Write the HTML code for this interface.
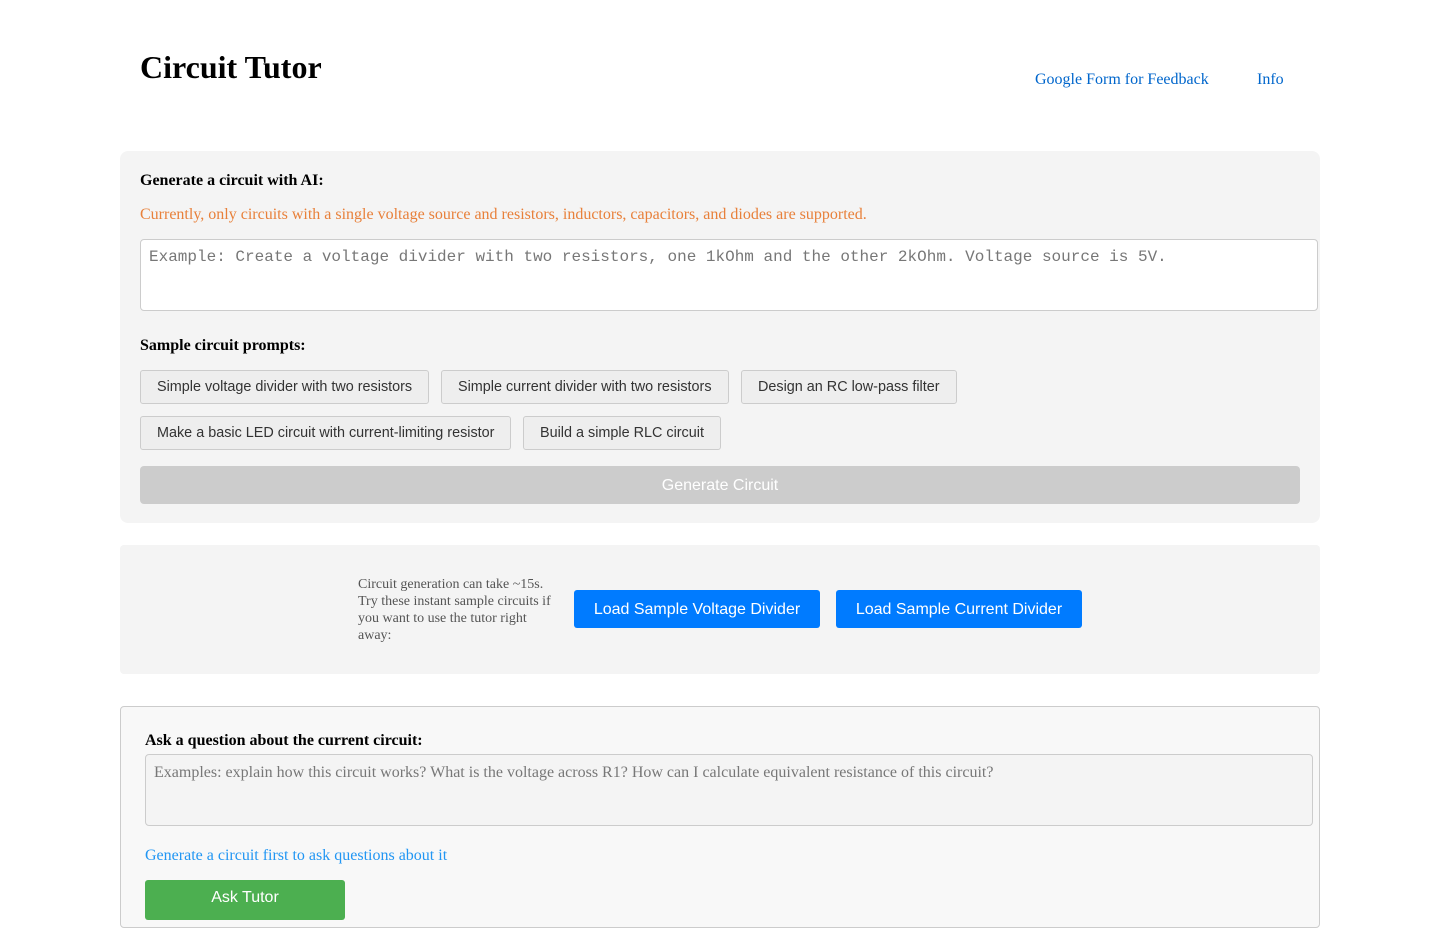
<!DOCTYPE html>
<html><head><meta charset="utf-8"><style>
body{margin:0;background:#fff;font-family:"Liberation Serif",serif;width:1440px;height:900px;overflow:hidden;position:relative}
.a{position:absolute}
h1{position:absolute;left:140px;top:48px;margin:0;font-size:32px;font-weight:bold;line-height:38px}
.link{color:#0066cc;font-size:16px;top:71px}
.box1{left:120px;top:151px;width:1200px;height:372px;background:#f4f4f4;border-radius:8px}
.b{font-weight:bold;font-size:16px}
.ta{position:absolute;box-sizing:border-box;border:1px solid #ccc;border-radius:4px;background:#fff}
.sb{position:absolute;box-sizing:border-box;height:34px;background:#eee;border:1px solid #ccc;border-radius:3px;font-family:"Liberation Sans",sans-serif;font-size:14.4px;color:#333;line-height:32px;padding:0 16px}
.blue{position:absolute;background:#007bff;color:#fff;font-family:"Liberation Sans",sans-serif;font-size:16px;height:38px;line-height:40px;text-align:center;border-radius:3px}
</style></head><body>
<h1>Circuit Tutor</h1>
<div class="a link" style="left:1035px">Google Form for Feedback</div>
<div class="a link" style="left:1257px">Info</div>
<div class="a box1"></div>
<div class="a b" style="left:140px;top:172px">Generate a circuit with AI:</div>
<div class="a" style="left:140px;top:206px;color:#e8803a;font-size:16px">Currently, only circuits with a single voltage source and resistors, inductors, capacitors, and diodes are supported.</div>
<div class="ta" style="left:140px;top:239px;width:1178px;height:72px"></div>
<div class="a" style="left:149px;top:248px;font-family:'Liberation Mono',monospace;font-size:16px;color:#777">Example: Create a voltage divider with two resistors, one 1kOhm and the other 2kOhm. Voltage source is 5V.</div>
<div class="a b" style="left:140px;top:337px">Sample circuit prompts:</div>
<div class="sb" style="left:140px;top:370px">Simple voltage divider with two resistors</div>
<div class="sb" style="left:441px;top:370px">Simple current divider with two resistors</div>
<div class="sb" style="left:741px;top:370px">Design an RC low-pass filter</div>
<div class="sb" style="left:140px;top:416px">Make a basic LED circuit with current-limiting resistor</div>
<div class="sb" style="left:523px;top:416px">Build a simple RLC circuit</div>
<div class="a" style="left:140px;top:466px;width:1160px;height:38px;background:#ccc;border-radius:4px;color:#fff;font-family:'Liberation Sans',sans-serif;font-size:16px;line-height:40px;text-align:center">Generate Circuit</div>
<div class="a" style="left:120px;top:545px;width:1200px;height:129px;background:#f4f4f4;border-radius:4px"></div>
<div class="a" style="left:358px;top:576px;width:205px;font-size:14px;line-height:17px;color:#555">Circuit generation can take ~15s. Try these instant sample circuits if you want to use the tutor right away:</div>
<div class="blue" style="left:574px;top:590px;width:246px">Load Sample Voltage Divider</div>
<div class="blue" style="left:836px;top:590px;width:246px">Load Sample Current Divider</div>
<div class="a" style="left:120px;top:706px;width:1198px;height:220px;background:#f8f8f8;border:1px solid #ccc;border-radius:4px"></div>
<div class="a b" style="left:145px;top:732px">Ask a question about the current circuit:</div>
<div class="ta" style="left:145px;top:754px;width:1168px;height:72px;background:#f4f4f4"></div>
<div class="a" style="left:154px;top:764px;font-size:16px;color:#777">Examples: explain how this circuit works? What is the voltage across R1? How can I calculate equivalent resistance of this circuit?</div>
<div class="a" style="left:145px;top:847px;font-size:16px;color:#2196f3">Generate a circuit first to ask questions about it</div>
<div class="a" style="left:145px;top:880px;width:200px;height:40px;background:#4caf50;border-radius:3px;color:#fff;font-family:'Liberation Sans',sans-serif;font-size:16px;text-align:center;line-height:32px;padding-top:0"><span style="position:relative;top:2px">Ask Tutor</span></div>
</body></html>
